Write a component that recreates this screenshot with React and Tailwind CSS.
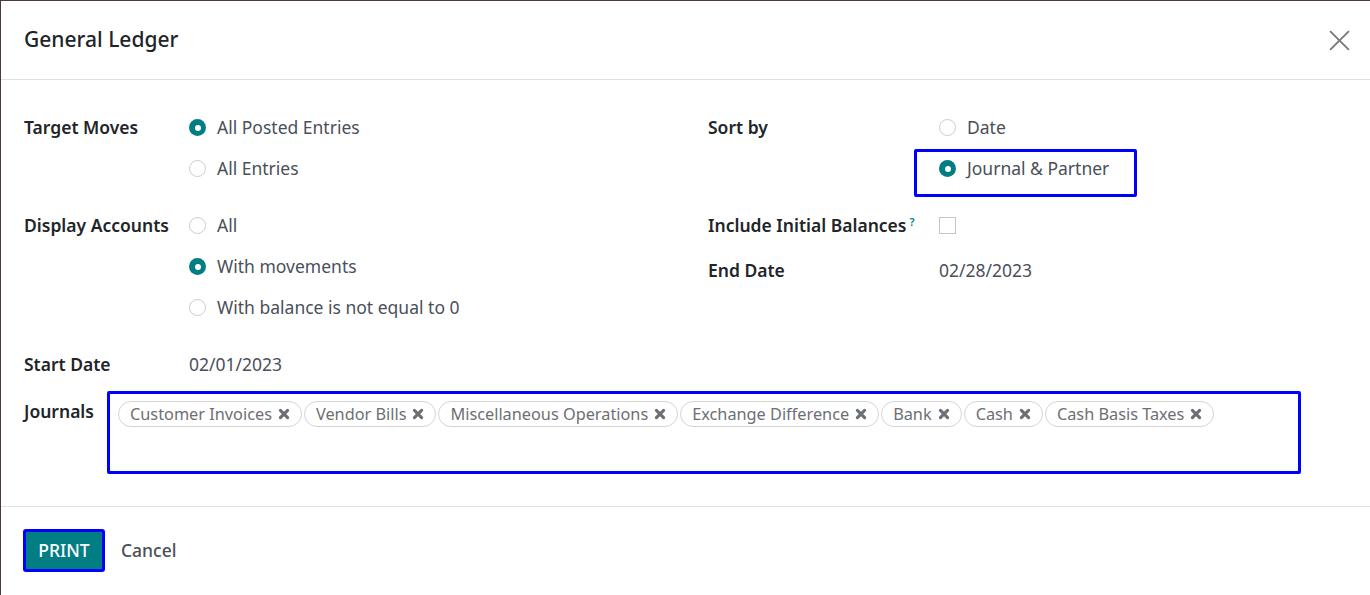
import React from "react";

const font = { fontFamily: '"Noto Sans", "Open Sans", sans-serif' };

function Radio({ checked }) {
  return checked ? (
    <span className="flex h-[17px] w-[17px] items-center justify-center rounded-full bg-[#017e84]">
      <span className="h-[6px] w-[6px] rounded-full bg-white" />
    </span>
  ) : (
    <span className="h-[17px] w-[17px] rounded-full border border-[#c9ccd1] bg-white" />
  );
}

function RadioRow({ checked, label }) {
  return (
    <div className="flex h-[41px] items-center gap-[11px]">
      <Radio checked={checked} />
      <span className="text-[17.5px] text-[#4a4f59]">{label}</span>
    </div>
  );
}

function Label({ children }) {
  return <span className="text-[17.5px] font-semibold text-[#212529]">{children}</span>;
}

function Tag({ name }) {
  return (
    <span className="flex h-[26px] items-center gap-[6px] rounded-full border border-[#d4d4d4] px-[11px] text-[16.3px] text-[#6c6f75]">
      <span>{name}</span>
      <svg width="12" height="12" viewBox="0 0 10 10" className="text-[#6c6f75]">
        <path d="M2 2 L8 8 M8 2 L2 8" stroke="currentColor" strokeWidth="2.6" strokeLinecap="round" />
      </svg>
    </span>
  );
}

export default function App() {
  const tags = [
    "Customer Invoices",
    "Vendor Bills",
    "Miscellaneous Operations",
    "Exchange Difference",
    "Bank",
    "Cash",
    "Cash Basis Taxes",
  ];
  return (
    <div style={font} className="flex h-[595px] w-[1370px] flex-col overflow-hidden border-l border-t border-[#4a3a3a] bg-white">
      {/* header */}
      <div className="flex h-[79px] shrink-0 items-center justify-between border-b border-[#dee2e6] pl-[23px] pr-[20px]">
        <h1 className="text-[21px] font-medium text-[#212529]">General Ledger</h1>
        <svg width="21" height="21" viewBox="0 0 20 20" className="text-[#7a7a7a]">
          <path d="M1 1 L19 19 M19 1 L1 19" stroke="currentColor" strokeWidth="1.8" />
        </svg>
      </div>

      {/* body */}
      <div className="flex h-[427px] shrink-0 flex-col border-b border-[#dee2e6] pl-[23px] pt-[27px]">
        <div className="flex">
          {/* left column */}
          <div className="flex w-[684px] flex-col">
            <div className="flex">
              <div className="w-[165px] pt-[7px]">
                <Label>Target Moves</Label>
              </div>
              <div className="flex flex-col">
                <RadioRow checked label="All Posted Entries" />
                <RadioRow label="All Entries" />
              </div>
            </div>
            <div className="mt-[16px] flex">
              <div className="w-[165px] pt-[7px]">
                <Label>Display Accounts</Label>
              </div>
              <div className="flex flex-col">
                <RadioRow label="All" />
                <RadioRow checked label="With movements" />
                <RadioRow label="With balance is not equal to 0" />
              </div>
            </div>
            <div className="mt-[16px] flex h-[41px] items-center">
              <div className="w-[165px]">
                <Label>Start Date</Label>
              </div>
              <span className="text-[17.5px] text-[#4a4f59]">02/01/2023</span>
            </div>
          </div>

          {/* right column */}
          <div className="flex flex-col">
            <div className="flex">
              <div className="w-[231px] pt-[7px]">
                <Label>Sort by</Label>
              </div>
              <div className="relative flex flex-col">
                <RadioRow label="Date" />
                <RadioRow checked label="Journal & Partner" />
                <div className="absolute left-[-25px] top-[42px] h-[48px] w-[223px] rounded-[2px] border-[3px] border-[#0000ff]" />
              </div>
            </div>
            <div className="mt-[16px] flex h-[41px] items-center">
              <div className="w-[231px]">
                <Label>Include Initial Balances</Label>
                <sup className="relative top-[-6px] ml-[3px] text-[11px] font-semibold text-[#017e84]">?</sup>
              </div>
              <span className="h-[17px] w-[17px] border border-[#c2c5ca] bg-white" />
            </div>
            <div className="mt-[4px] flex h-[41px] items-center">
              <div className="w-[231px]">
                <Label>End Date</Label>
              </div>
              <span className="text-[17.5px] text-[#4a4f59]">02/28/2023</span>
            </div>
          </div>
        </div>

        {/* journals */}
        <div className="mt-[6px] flex">
          <div className="w-[83px] pt-[7px]">
            <Label>Journals</Label>
          </div>
          <div className="h-[83px] w-[1194px] rounded-[2px] border-[3px] border-[#0000ff] pl-[8px] pt-[7px]">
            <div className="flex flex-wrap gap-[2px]">
              {tags.map((t) => (
                <Tag key={t} name={t} />
              ))}
            </div>
          </div>
        </div>
      </div>

      {/* footer */}
      <div className="flex items-center gap-[16px] pl-[22px] pt-[22px]">
        <button className="h-[43px] w-[82px] rounded-[3px] border-[3px] border-[#0000ff] bg-[#017e84] text-[17.5px] font-medium text-white">
          PRINT
        </button>
        <span className="text-[17.5px] font-medium text-[#4a4f59]">Cancel</span>
      </div>
    </div>
  );
}
